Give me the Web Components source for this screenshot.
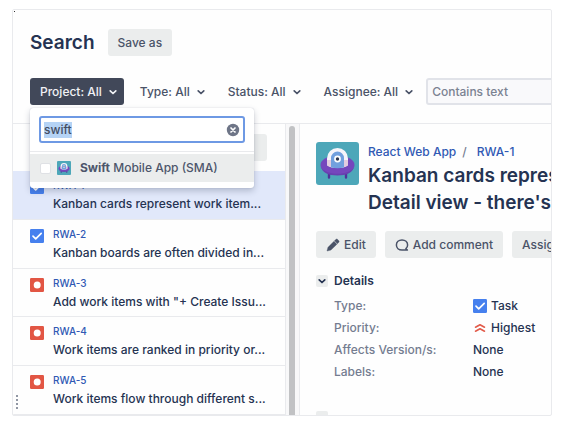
<!DOCTYPE html>
<html lang="en">
<head>
<meta charset="utf-8">
<title>Search</title>
<style>
  html { height: 100%; }
  body {
    margin: 0; padding: 9px 19px 17px 12px; box-sizing: border-box; height: 100%;
    background: #fff; color: #253352;
    font-family: Inter, "Liberation Sans", sans-serif; font-size: 12px; line-height: 16px; font-weight: 500;
    --muted: #747c90; --link: #3059b4; --line: #e9eaed; --button: #ebeded;
  }
</style>
</head>
<body>
<issue-search></issue-search>
<script>
const define = (name, html, setup) => {
  const template = document.createElement('template');
  template.innerHTML = '<style>*{box-sizing:border-box}button,input{font:inherit;color:inherit;margin:0}a{color:var(--link);text-decoration:none}</style>' + html;
  customElements.define(name, class extends HTMLElement {
    constructor() {
      super();
      this.attachShadow({ mode: 'open' }).append(template.content.cloneNode(true));
    }
    connectedCallback() { if (setup) setup(this, this.shadowRoot); }
  });
};

const icons = {
  task: '<svg viewBox="0 0 14 14"><rect width="14" height="14" rx="1.2" fill="#4680ee"/><path d="M3 7.2 5.7 9.8 11.2 4.4" fill="none" stroke="#fff" stroke-width="1.7" stroke-linecap="round" stroke-linejoin="round"/></svg>',
  bug: '<svg viewBox="0 0 14 14"><rect width="14" height="14" rx="1.2" fill="#e25644"/><circle cx="7.2" cy="7" r="3.5" fill="#fff"/></svg>',
  chevron: '<svg viewBox="0 0 14 14"><path d="M4.2 5.8 7 8.5 9.8 5.8" fill="none" stroke="currentColor" stroke-width="1.7" stroke-linecap="round" stroke-linejoin="round"/></svg>',
  clear: '<svg viewBox="0 0 14 14"><circle cx="7" cy="7" r="6.2" fill="#6e7587"/><path d="m5 5 4 4M9 5 5 9" stroke="#fff" stroke-width="1.7" stroke-linecap="round"/></svg>',
  pencil: '<svg viewBox="0 0 14 14"><path d="M1 13 2 9.300 8 3.300 10.900 6.200 4.900 12.100ZM8.500 2.800 10 1.300Q10.700.700 11.400 1.300L12.800 2.700Q13.500 3.400 12.800 4.200L11.400 5.700Z" fill="currentColor" stroke="currentColor" stroke-width=".4" stroke-linejoin="round"/></svg>',
  comment: '<svg viewBox="0 0 14 14"><path d="M12.400 12H7C3.700 12 1.400 9.900 1.400 7S3.700 2 7 2s5.600 2.100 5.600 5c0 1.500-.6 2.800-1.700 3.700Z" fill="none" stroke="currentColor" stroke-width="1.500" stroke-linecap="round" stroke-linejoin="round"/></svg>',
  highest: '<svg viewBox="0 0 14 14"><path d="M2.500 6.200 7 3.700l4.500 2.500M2.500 10.200 7 7.700l4.500 2.500" fill="none" stroke="#e25b4a" stroke-width="1.600" stroke-linecap="round" stroke-linejoin="round"/></svg>',
  avatar: '<svg viewBox="0 0 43 43"><rect width="43" height="43" rx="3" fill="#4da7b9"/><path d="M13 31v4.500M30 31v4.500" stroke="#50339a" stroke-width="2.400" stroke-linecap="round"/><ellipse cx="21.500" cy="23" rx="17" ry="9.500" fill="#7547bd"/><path d="M5 25c4 9 29 9 33 0-1 5-7 8.500-16.500 8.500S6 30 5 25Z" fill="#6a40b0"/><path d="M11 16.500a10.500 10.500 0 0 1 21 0V23c-3 4-18 4-21 0Z" fill="#f7f5fa"/><path d="M11 18h21v5c-3 4-18 4-21 0Z" fill="#e3ccdf"/><path d="M15 16a6.500 6.500 0 0 1 13 0v9.500q-6.500 1.500-13 0Z" fill="#72a0de"/><circle cx="21.500" cy="17" r="3.400" fill="#fff"/><circle cx="21.500" cy="17" r="1.700" fill="#2f3850"/></svg>'
};

define('ui-icon', `<style>:host{display:block;flex:none;width:14px;height:14px}:host([name=avatar]){width:43px;height:43px}:host([small]){width:14px;height:14px}span{display:contents}svg{display:block;width:100%;height:100%}</style><span></span>`,
  (el, root) => { root.querySelector('span').innerHTML = icons[el.getAttribute('name')] || ''; });

define('ui-button', `<style>
  :host{display:block;flex:none}
  button{display:flex;align-items:center;gap:4px;height:27px;padding:0 10px;border:0;border-radius:3px;background:var(--button);color:#4a5368;white-space:nowrap}
</style><button type="button"><slot></slot></button>`);

define('filter-button', `<style>
  :host{display:block;flex:none}
  button{display:flex;align-items:center;gap:4px;height:27px;padding:0 4px 0 10px;border:0;border-radius:3px;background:none;color:#4a5368;white-space:nowrap}
  :host([open]) button{background:#414859;color:#f1f2f5}
</style><button type="button"><slot></slot><ui-icon name="chevron"></ui-icon></button>`,
  (el, root) => root.querySelector('button').setAttribute('aria-expanded', el.hasAttribute('open')));

define('project-picker', `<style>
  :host{display:block;width:224px;background:#fff;border-radius:3px;box-shadow:0 3px 6px rgba(40,50,80,.25),0 0 1px rgba(40,50,80,.3)}
  .search{padding:8px 9px;border-bottom:1px solid var(--line)}
  .field{display:flex;align-items:center;height:27px;padding:0 3px;border:2px solid #6e99e4;border-radius:3px;background:#fff}
  input[type=text]{flex:1;min-width:0;padding:0;border:0;outline:0;background:none;color:#434c62}
  input::selection{background:#b5d3f5;color:#434c62}
  button{border:0;padding:0;background:none}
  .options{padding:2px 0 6px}
  label{display:flex;align-items:center;height:28px;padding-left:10px;background:var(--button);color:#4d566b;white-space:nowrap}
  input[type=checkbox]{appearance:none;width:11px;height:11px;border:1px solid #dfe1e5;border-radius:2px;background:#fff}
  ui-icon[small]{margin:0 9px 0 6px}
  b{font-weight:700}
</style>
<div class="search"><div class="field"><input type="text" value="swift" aria-label="Search projects"><button type="button" aria-label="Clear"><ui-icon name="clear"></ui-icon></button></div></div>
<div class="options"><label><input type="checkbox"><ui-icon name="avatar" small></ui-icon><span><b>Swift</b> Mobile App (SMA)</span></label></div>`,
  (el, root) => { const field = root.querySelector('input[type=text]'); field.focus(); field.select(); });

define('issue-row', `<style>
  :host{display:flex;flex:1 0 0;min-height:0;gap:9px;padding:8px 16px 0 17px;border-bottom:1px solid var(--line);background:#fefefe}
  :host([selected]){background:#e1e8fa}
  div{min-width:0}
  ui-icon{margin-top:1px}
  a{display:block;font-size:10px;line-height:12px}
  p{margin:5px 0 0;white-space:nowrap}
</style><ui-icon></ui-icon><div><a href="#"></a><p><slot></slot></p></div>`,
  (el, root) => {
    root.querySelector('a').textContent = el.getAttribute('key');
    const icon = document.createElement('ui-icon');
    icon.setAttribute('name', el.getAttribute('type'));
    root.querySelector('ui-icon').replaceWith(icon);
  });

define('detail-field', `<style>
  :host{display:grid;grid-template-columns:139px 1fr;align-items:center;height:22px}
  .name{color:var(--muted)} .value{display:flex;align-items:center;gap:4px}
</style><span class="name"><slot name="label"></slot></span><span class="value"><slot></slot></span>`);

define('issue-detail', `<style>
  :host{display:block;min-width:0;overflow:hidden;padding:18px 0 0 16px;white-space:nowrap}
  header{display:flex;gap:9px}
  nav{display:flex;gap:6px;padding-top:1px;line-height:18px}
  nav span{color:var(--muted)} nav a + span + a{margin-left:4px}
  h2{margin:1px 0 0;font-size:19px;line-height:27px;font-weight:600}
  .actions{display:flex;gap:9px;margin-top:15px}
  h3{display:flex;align-items:center;gap:6px;margin:15px 0 0;font-size:12px;line-height:16px;font-weight:600}
  .toggle{display:flex;align-items:center;justify-content:center;width:12px;height:12px;padding:0;border:0;border-radius:2px;background:var(--button)}
  .fields{padding:6px 0 28px 18px}
</style>
<header><ui-icon name="avatar"></ui-icon><div><nav><a href="#">React Web App</a><span>/</span><a href="#">RWA-1</a></nav><h2>Kanban cards repres<br>Detail view - there's</h2></div></header>
<div class="actions"><ui-button><ui-icon name="pencil"></ui-icon>Edit</ui-button><ui-button><ui-icon name="comment"></ui-icon>Add comment</ui-button><ui-button>Assign</ui-button></div>
<h3><button class="toggle" type="button" aria-label="Collapse details"><ui-icon name="chevron"></ui-icon></button>Details</h3>
<div class="fields">
<detail-field><span slot="label">Type:</span><ui-icon name="task"></ui-icon>Task</detail-field>
<detail-field><span slot="label">Priority:</span><ui-icon name="highest"></ui-icon>Highest</detail-field>
<detail-field><span slot="label">Affects Version/s:</span>None</detail-field>
<detail-field><span slot="label">Labels:</span>None</detail-field>
</div>
<button class="toggle" type="button" aria-label="Expand section"></button>`);

define('issue-search', `<style>
  :host{position:relative;display:flex;flex-direction:column;height:100%;border:1px solid var(--line);border-radius:2px;background:#fefefe;overflow:hidden}
  :host::before{content:"";position:absolute;top:1px;left:1px;width:1px;height:1px;background:#333}
  .title{display:flex;align-items:center;gap:13px;padding:19px 17px 0}
  h1{margin:0;font-size:19px;line-height:27px;font-weight:600}
  .filters{display:flex;gap:6px;padding:22px 0 18px 17px;border-bottom:1px solid var(--line)}
  .menu{position:relative}
  project-picker{position:absolute;top:30px;left:0;z-index:2}
  .filters > input{flex:1 0 120px;height:27px;margin-right:-8px;padding:0 4px;border:2px solid #e1e3e9;border-radius:3px;background:#f9f9fb}
  .filters > input::placeholder{color:#7b8292;opacity:1}
  main{flex:1;min-height:0;display:grid;grid-template-columns:272px 15px 1fr}
  .list{display:flex;flex-direction:column;min-height:0}
  .tools{display:flex;justify-content:flex-end;padding:10px 18px 10px 0}
  .tools span{width:24px}
  .track{padding:2px 4px 0 3px;border:solid var(--line);border-width:0 1px;background:#f8f8f9}
  .thumb{height:100%;border-radius:4px 4px 0 0;background:#c1c2c4}
  .grip{position:absolute;left:3px;bottom:6px;display:grid;gap:2px}
  .grip i{width:2px;height:2px;border-radius:1px;background:#6d7486}
</style>
<div class="title"><h1>Search</h1><ui-button>Save as</ui-button></div>
<div class="filters">
<div class="menu"><filter-button open>Project: All</filter-button><project-picker></project-picker></div>
<filter-button>Type: All</filter-button><filter-button>Status: All</filter-button><filter-button>Assignee: All</filter-button>
<input type="text" placeholder="Contains text" aria-label="Contains text"></div>
<main>
<div class="list"><div class="tools"><ui-button><span></span></ui-button></div>
<issue-row key="RWA-1" type="task" selected>Kanban cards represent work item...</issue-row>
<issue-row key="RWA-2" type="task">Kanban boards are often divided in...</issue-row>
<issue-row key="RWA-3" type="bug">Add work items with "+ Create Issu...</issue-row>
<issue-row key="RWA-4" type="bug">Work items are ranked in priority or...</issue-row>
<issue-row key="RWA-5" type="bug">Work items flow through different s...</issue-row></div>
<div class="track"><div class="thumb"></div></div>
<issue-detail></issue-detail>
</main>
<div class="grip"><i></i><i></i><i></i><i></i></div>`);
</script>
</body>
</html>
